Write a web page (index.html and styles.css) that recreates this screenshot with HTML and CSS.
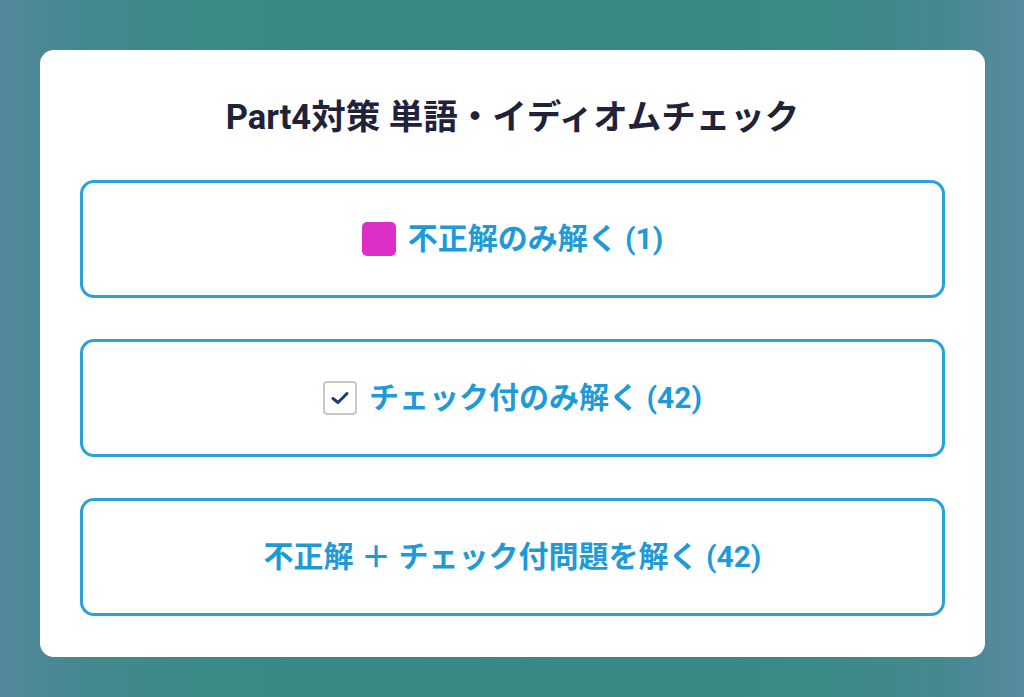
FILE: index.html
```html
<!DOCTYPE html>
<html lang="ja">
<head>
<meta charset="utf-8">
<link rel="stylesheet" href="styles.css">
</head>
<body>
<div class="page">
  <div class="card">
    <h1 class="title">Part4対策 単語・イディオムチェック</h1>
    <div class="options">
      <button class="option">
        <span class="icon-wrong"></span>
        <span class="label">不正解のみ解く (1)</span>
      </button>
      <button class="option">
        <span class="icon-check">
          <svg width="20" height="16" viewBox="0 0 20 16"><path d="M3 8.5 L8 12.5 L17 3.5" fill="none" stroke="#1f3a7a" stroke-width="3" stroke-linecap="round" stroke-linejoin="round"/></svg>
        </span>
        <span class="label">チェック付のみ解く (42)</span>
      </button>
      <button class="option">
        <span class="label">不正解 ＋ チェック付問題を解く (42)</span>
      </button>
    </div>
  </div>
</div>
</body>
</html>
```

FILE: styles.css
```css
* { box-sizing: border-box; }
html, body {
  margin: 0;
  padding: 0;
  width: 1024px;
  height: 697px;
  overflow: hidden;
}
body {
  font-family: Roboto, "Noto Sans CJK JP", sans-serif;
  background: linear-gradient(90deg, #55889e 0%, #43898f 8%, #3a8a86 20%, #378a83 50%, #3a8a86 80%, #45898f 92%, #5a8aa0 100%);
}
.page {
  padding: 50px 39px 40px 40px;
}
.card {
  background: #fff;
  border-radius: 14px;
  padding: 0 40px 41px;
}
.title {
  margin: 0;
  height: 130px;
  padding-top: 44px;
  font-size: 34.5px;
  font-weight: 700;
  color: #1f2238;
  text-align: center;
  line-height: 46px;
}
.options {
  display: flex;
  flex-direction: column;
  gap: 41px;
}
.option {
  height: 118px;
  border: 3px solid #2aa2d7;
  border-radius: 14px;
  background: #fff;
  display: flex;
  align-items: center;
  justify-content: center;
  gap: 12px;
  font-family: Roboto, "Noto Sans CJK JP", sans-serif;
  font-size: 30px;
  font-weight: 700;
  color: #1e9bd7;
  padding: 0;
}
.label { line-height: 1; }
.icon-wrong {
  width: 34px;
  height: 34px;
  border-radius: 5px;
  background: #dd2fc8;
  flex: none;
}
.icon-check {
  width: 34px;
  height: 34px;
  border: 2px solid #c9c9c9;
  border-radius: 4px;
  display: flex;
  align-items: center;
  justify-content: center;
  flex: none;
}
```
